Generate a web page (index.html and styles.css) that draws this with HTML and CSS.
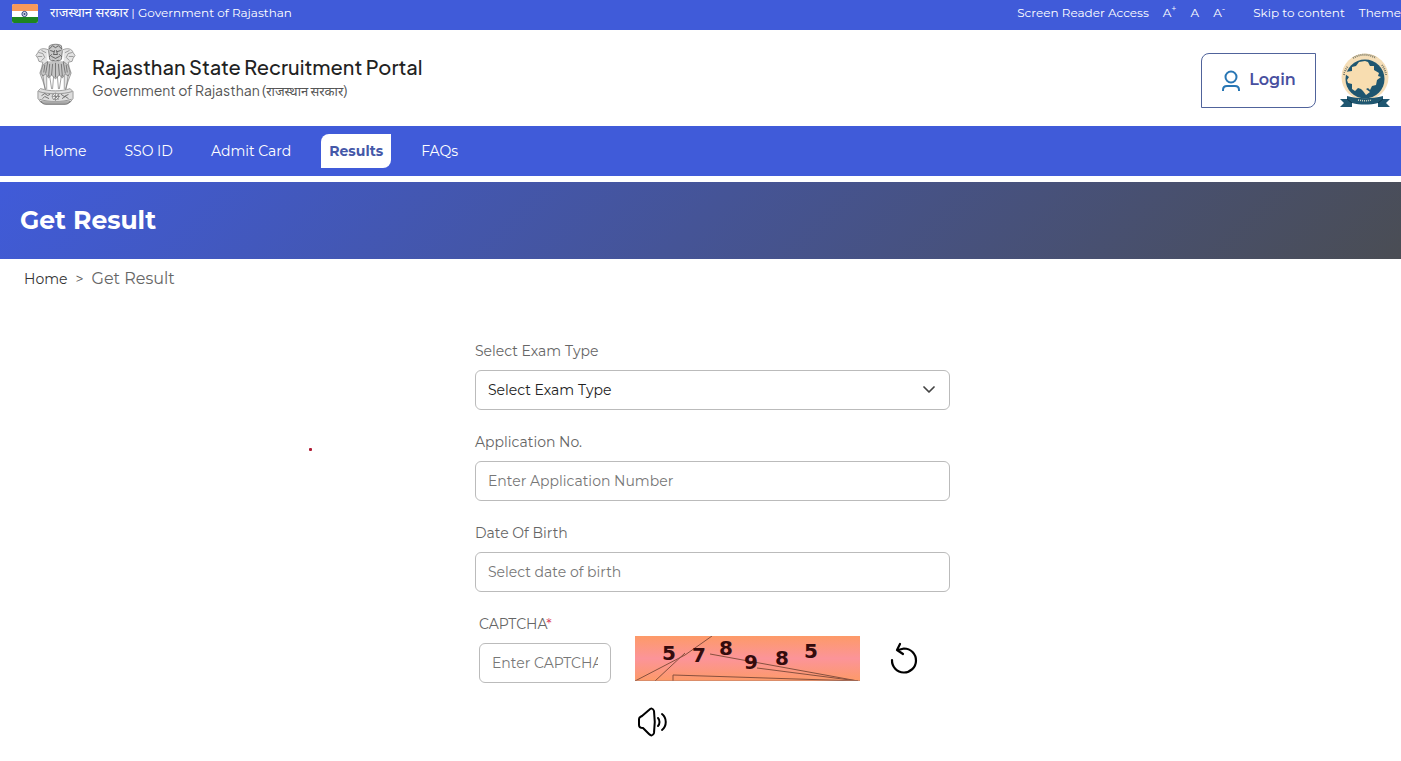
FILE: index.html
```html
<!DOCTYPE html>
<html lang="en">
<head>
  <meta charset="UTF-8">
  <meta name="viewport" content="width=device-width, initial-scale=1.0">
  <title>Rajasthan State Recruitment Portal</title>
  <link rel="stylesheet" href="styles.css">
</head>
<body>

<div class="topbar">
  <div class="topbar-left">
    <svg class="flag" viewBox="0 0 26 19" aria-hidden="true">
      <rect width="26" height="19" rx="2" fill="#fff"/>
      <path d="M0 7V2a2 2 0 0 1 2-2h22a2 2 0 0 1 2 2v5z" fill="#f7995a"/>
      <path d="M0 13h26v4a2 2 0 0 1-2 2H2a2 2 0 0 1-2-2z" fill="#1d8520"/>
      <circle cx="12.500" cy="10" r="2.600" fill="#d5dbea" stroke="#34447c" stroke-width="1"/>
      <circle cx="12.500" cy="10" r="1" fill="#34447c"/>
    </svg>
    <span class="gov"><span class="hindi" lang="hi">राजस्थान सरकार</span> | Government of Rajasthan</span>
  </div>
  <div class="topbar-right">
    <a href="#">Screen Reader Access</a>
    <div class="font-sizes">
      <button type="button">A<sup>+</sup></button>
      <button type="button">A</button>
      <button type="button">A<sup>-</sup></button>
    </div>
    <a href="#content">Skip to content</a>
    <a href="#">Theme</a>
  </div>
</div>

<header class="header">
  <div class="brand">
    <svg class="emblem" viewBox="0 0 42 64" fill="none" stroke="#777" stroke-width="0.700" stroke-linecap="round" aria-hidden="true">
      <!-- side lions -->
      <path d="M13 6C9 4 4 5 3 9l-2 3 2 3 1 3 4 1-1 5-2 6 3 8 3 9" fill="#e4e4e4"/>
      <path d="M29 6c4-2 9-1 10 3l2 3-2 3-1 3-4 1 1 5 2 6-3 8-3 9" fill="#e4e4e4"/>
      <path d="M4 9l4 1 2 4-3 3M7 7l4 2M38 9l-4 1-2 4 3 3M35 7l-4 2M3 13h4M39 13h-4"/>
      <!-- middle lion -->
      <path d="M15 2c3-2 9-2 12 0l1 6-1 8-4 3h-4l-4-3-1-8z" fill="#c8c8c8" stroke="#555"/>
      <path d="M15 5l3-3 3 2 3-2 3 3M16 7l3 1M26 7l-3 1M20 7l-1 4h4l-1-4M17 13l4 2 4-2M17 11l-2 2M25 11l2 2M18 17l3 1 3-1" stroke="#333"/>
      <path d="M13 18l-5 4-2 8 2 3 3-2 3 4 3-3 4 4 4-4 3 3 3-4 3 2 2-3-2-8-5-4" fill="#c4c4c4"/>
      <path d="M10 22l-1 7M13 19l-2 11M15 21l-1 12M18 21l-1 11M21 20v14M24 21l1 11M27 21l1 12M29 19l2 11M32 22l1 7" stroke="#555"/>
      <path d="M8 32l2 14M12 33v13M15 33l2 13M19 34l-1 12M23 34l1 12M27 33l-2 13M30 33v13M34 32l-2 14"/>
      <!-- abacus and base -->
      <path d="M6 46c10 3 20 3 30 0l3 3v7l-3 4H6l-3-4v-7z" fill="#ddd"/>
      <path d="M4 49c9 3 25 3 34 0M5 57c9 3 23 3 32 0"/>
      <circle cx="21" cy="54" r="3.500" fill="#eee"/>
      <path d="M21 51v7M18 54h7M19 52l5 5M24 52l-5 5"/>
      <path d="M7 53l3-2 3 2 2-1M8 56l2-2 4 2M27 52l3 2 4-2M28 56l3-2 3 2" stroke="#444"/>
      <path d="M6 59c1 2 3 3 5 3h20c2 0 4-1 5-3" fill="#aaa" stroke="#444"/>
    </svg>
    <div class="brand-text">
      <h1 class="brand-title">Rajasthan State Recruitment Portal</h1>
      <p class="brand-sub">Government of Rajasthan (<span class="hindi" lang="hi">राजस्थान सरकार</span>)</p>
    </div>
  </div>
  <div class="header-right">
    <button type="button" class="login">
      <svg width="20" height="22" viewBox="0 0 20 22" fill="none" stroke="#2876b4" stroke-width="2" aria-hidden="true">
        <circle cx="10" cy="8" r="5.500"/>
        <path d="M2 22v-1c0-3 2-4 4-4h8c2 0 4 1 4 4v1"/>
      </svg>
      Login
    </button>
    <svg class="seal" viewBox="0 0 50 56" aria-hidden="true">
      <circle cx="25" cy="25" r="23.500" fill="#f5deb8"/>
      <circle cx="25" cy="27" r="19.500" fill="#1f5670"/>
      <path d="M4 23a20 20 0 0 1 4-9M13 6a22 22 0 0 1 23 0M42 13a20 20 0 0 1 4 10" fill="none" stroke="#77796a" stroke-width="2" stroke-dasharray="1 1"/>
      <path d="M25 9l3 1 2 4 4 0 0 4 5 3-1 3 3 1-4 3-1 5-4 1-2 4-2-2-2 1 4 3-4 3-3-4-2-2-3-1-3 3-3-2 0-5-4-1-1-3 2-3-4-3 0-2 7-1 0-4 4-1 3-4z" fill="#f8ddb0"/>
      <path d="M0 47h7v-3c11 3 25 3 36 0v3h7l-4 4 4 4H38v-4c-8 2-18 2-26 0v4H0l4-4z" fill="#1f5670"/>
      <path d="M18 48c5 1 9 1 14 0" stroke="#cfd3bf" stroke-width="1.500" stroke-dasharray="1 1" fill="none"/>
      <path d="M7 47l5 4M43 47l-5 4" stroke="#0d3448"/>
    </svg>
  </div>
</header>

<nav class="nav">
  <a href="#">Home</a>
  <a href="#">SSO ID</a>
  <a href="#">Admit Card</a>
  <a href="#" class="active">Results</a>
  <a href="#">FAQs</a>
</nav>

<div class="banner">
  <h2>Get Result</h2>
</div>

<div class="breadcrumb">
  <a href="#">Home</a>
  <span class="sep">&gt;</span>
  <span class="current">Get Result</span>
</div>

<main class="content" id="content">
  <span class="dot"></span>
  <form class="result-form">
    <div class="field">
      <label for="examType">Select Exam Type</label>
      <div class="select-wrap">
        <select id="examType" class="control">
          <option>Select Exam Type</option>
        </select>
        <svg class="chevron" viewBox="0 0 12 8" aria-hidden="true"><path d="M1 1l5 5 5-5" fill="none" stroke="#444" stroke-width="1.700" stroke-linecap="round" stroke-linejoin="round"/></svg>
      </div>
    </div>
    <div class="field">
      <label for="appNo">Application No.</label>
      <input type="text" id="appNo" class="control" placeholder="Enter Application Number">
    </div>
    <div class="field">
      <label for="dob">Date Of Birth</label>
      <input type="text" id="dob" class="control" placeholder="Select date of birth">
    </div>
    <div class="captcha-row">
      <div class="captcha-field">
        <label for="captcha">CAPTCHA<span class="required">*</span></label>
        <input type="text" id="captcha" class="control" placeholder="Enter CAPTCHA">
      </div>
      <div class="captcha-media">
        <svg class="captcha-img" viewBox="0 0 225 45">
          <defs>
            <linearGradient id="captchaBg" x1="0" y1="0" x2="0" y2="1">
              <stop offset="0" stop-color="#fd9a68"/>
              <stop offset="0.500" stop-color="#fc9499"/>
              <stop offset="1" stop-color="#fd9a68"/>
            </linearGradient>
          </defs>
          <rect width="225" height="45" fill="url(#captchaBg)"/>
          <path d="M0 45L50 19 77 0M20 45l30-28M75 18l148 27M122 32l101 13M38 45v-6l185 6" fill="none" stroke="#87503f"/>
          <path d="M0 45h225" stroke="#b9806a"/>
          <g class="captcha-digits">
            <text x="27" y="24">5</text>
            <text x="57" y="26">7</text>
            <text x="84" y="19">8</text>
            <text x="109" y="33">9</text>
            <text x="140" y="29">8</text>
            <text x="169" y="22">5</text>
          </g>
        </svg>
        <button type="button" class="icon-btn" aria-label="Play captcha">
          <svg width="30" height="30" viewBox="0 0 30 30" fill="none" stroke="#000" stroke-width="2" stroke-linecap="round" stroke-linejoin="round">
            <path d="M2 12c0-2 1-2 3-3l7-6c2-2 4-2 5 1 1 7 1 15 0 22-1 3-3 3-5 1l-6-6c-3 0-4-1-4-3z"/>
            <path d="M21 11c2 2 2 6 0 8M25 7c5 4 5 12 0 16"/>
          </svg>
        </button>
      </div>
      <button type="button" class="icon-btn refresh" aria-label="Refresh captcha">
        <svg width="28" height="32" viewBox="0 0 28 32" fill="none" stroke="#000" stroke-width="2.200" stroke-linecap="round" stroke-linejoin="round">
          <path d="M2 18A12 12 0 1 0 14 6.500L8 8"/>
          <path d="M10 2L7 8l6 4"/>
        </svg>
      </button>
    </div>
  </form>
</main>

</body>
</html>
```
FILE: styles.css
```css
* {
  box-sizing: border-box;
}

body {
  margin: 0;
  font-family: Montserrat, Inter, "Noto Sans", sans-serif;
  font-size: 14px;
  line-height: 20px;
  color: #333;
  background: #fff;
}

a {
  color: inherit;
  text-decoration: none;
}

button {
  font: inherit;
  color: inherit;
  background: none;
  border: 0;
  padding: 0;
  cursor: pointer;
}

.topbar {
  display: flex;
  justify-content: space-between;
  height: 30px;
  padding-left: 12px;
  padding-bottom: 4px;
  background: #405bd9;
  color: #fff;
  font-size: 12px;
  align-items: center;
  white-space: nowrap;
}

.topbar-left {
  display: flex;
  align-items: center;
  gap: 12px;
}

.flag {
  width: 26px;
  height: 19px;
}

.gov {
  padding-bottom: 2px;
}

.hindi {
  font-size: 13px;
}

.topbar-right {
  display: flex;
  gap: 14px;
}

.font-sizes {
  display: flex;
  gap: 14px;
  padding-right: 14px;
}

.font-sizes sup {
  font-size: 9px;
  line-height: 0;
}

.header {
  display: flex;
  justify-content: space-between;
  align-items: center;
  height: 96px;
  padding: 0 11px 0 35px;
}

.brand {
  display: flex;
  align-items: center;
  gap: 16px;
}

.emblem {
  width: 41px;
  height: 64px;
  margin-bottom: 6px;
}

.brand-text {
  font-family: "Plus Jakarta Sans", Inter, "Noto Sans", sans-serif;
  padding-bottom: 2px;
}

.brand-title {
  margin: 0;
  font-size: 20px;
  line-height: 26px;
  font-weight: 500;
  color: #222;
}

.brand-sub {
  margin: 0;
  font-size: 14px;
  line-height: 20px;
  color: #555;
}

.header-right {
  display: flex;
  align-items: center;
  gap: 24px;
  padding-top: 4px;
}

.login {
  display: flex;
  align-items: center;
  justify-content: center;
  gap: 8px;
  width: 115px;
  height: 55px;
  border: 1px solid #50639b;
  border-radius: 8px 0;
  color: #484f9f;
  font-size: 16px;
  font-weight: 600;
}

.seal {
  width: 50px;
  height: 56px;
}

.nav {
  display: flex;
  align-items: center;
  gap: 22px;
  height: 50px;
  padding: 0 35px;
  background: #405bd9;
  color: #fff;
}

.nav a {
  padding: 7px 8px;
}

.nav .active {
  background: #fff;
  color: #4558a8;
  font-weight: 700;
  border-radius: 8px 0;
}

.banner {
  margin-top: 6px;
  padding: 22px 20px 23px;
  background: linear-gradient(135deg, #405bd9, #4a4d54);
}

.banner h2 {
  margin: 0;
  font-size: 25px;
  line-height: 32px;
  font-weight: 700;
  color: #fff;
}

.breadcrumb {
  display: flex;
  align-items: center;
  gap: 8px;
  padding: 10px 24px;
}

.breadcrumb .sep {
  font-size: 14px;
  color: #555;
}

.breadcrumb .current {
  font-size: 16px;
  color: #666;
}

.content {
  position: relative;
  padding: 42px 0 24px 24px;
}

/* small red marker beside the form */
.dot {
  position: absolute;
  left: 309px;
  top: 149px;
  width: 3px;
  height: 3px;
  border-radius: 1px;
  background: #b01c35;
}

.result-form {
  max-width: 475px;
  margin: 0 auto;
}

.field {
  margin-bottom: 22px;
}

.result-form label {
  display: block;
  margin-bottom: 9px;
  color: #666;
}

.control {
  display: block;
  width: 100%;
  height: 40px;
  padding: 0 12px;
  border: 1px solid #bbb;
  border-radius: 6px;
  background: #fff;
  font: inherit;
  color: #222;
}

.control::placeholder {
  color: #777;
  opacity: 1;
}

.select-wrap {
  position: relative;
}

.select-wrap select {
  appearance: none;
}

.chevron {
  position: absolute;
  right: 15px;
  top: 16px;
  width: 12px;
  height: 8px;
  pointer-events: none;
}

.captcha-row {
  display: flex;
  align-items: flex-start;
  gap: 24px;
  padding-left: 4px;
}

.captcha-field {
  width: 132px;
}

.captcha-media {
  display: flex;
  flex-direction: column;
  align-items: flex-start;
  gap: 26px;
  padding-top: 22px;
}

.captcha-img {
  width: 225px;
  height: 45px;
}

.captcha-digits {
  font-family: "DejaVu Sans", sans-serif;
  font-size: 20px;
  font-weight: 700;
  fill: #340b0d;
}

.icon-btn {
  display: block;
  line-height: 0;
  padding-left: 2px;
}

.refresh {
  margin-top: 28px;
  padding-left: 6px;
}

.required {
  color: #d9455f;
}
```
